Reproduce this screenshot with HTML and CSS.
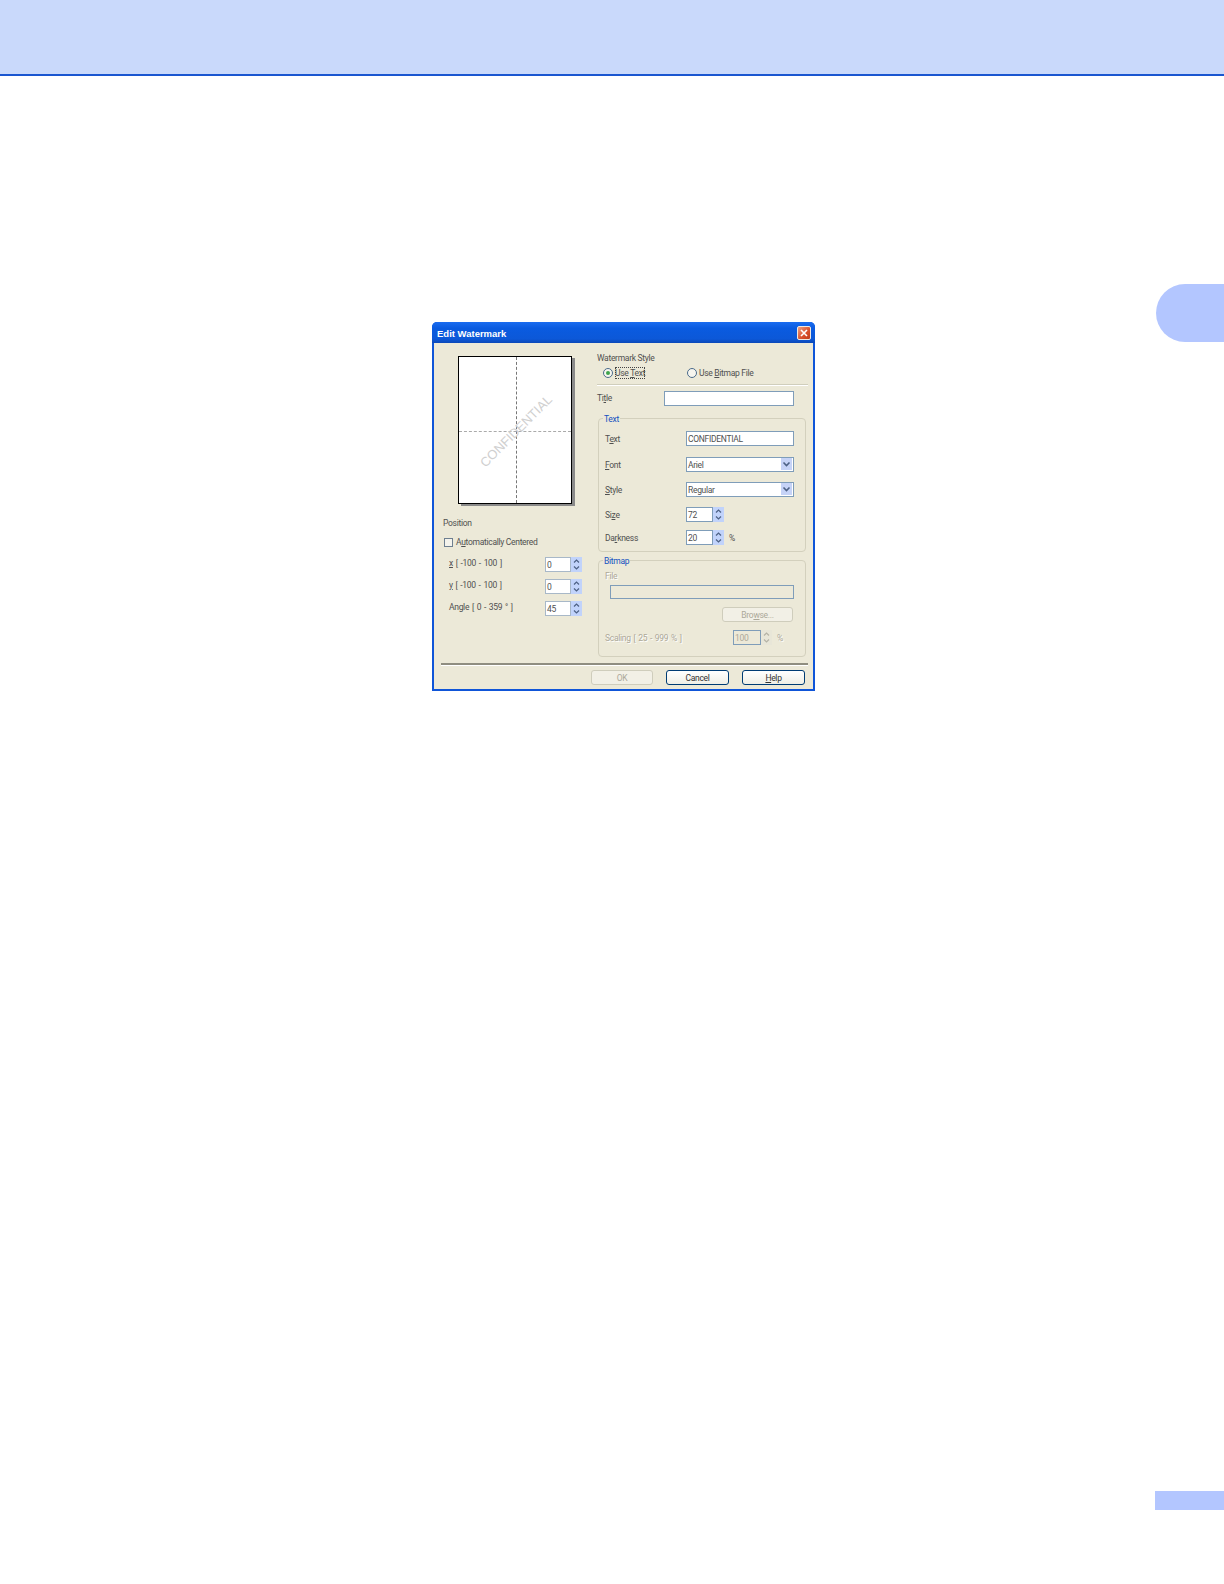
FILE: index.html

```html
<!DOCTYPE html>
<html lang="en">
<head>
  <meta charset="UTF-8">
  <title>Edit Watermark</title>
  <link rel="stylesheet" href="styles.css">
</head>
<body>
  <header class="band"></header>
  <div class="middle">
    <div class="dialog">
      <div class="titlebar">
        <span class="title">Edit Watermark</span>
        <span class="close">
          <svg width="14" height="14" viewBox="0 0 14 14"><path d="M4 4l6 6M10 4l-6 6" stroke="#fff" stroke-width="1.6" fill="none"/></svg>
        </span>
      </div>
      <div class="client">
        <div class="panes">
          <div class="left">
            <div class="page">
              <span class="vline"></span>
              <span class="hline"></span>
              <span class="mark">CONFIDENTIAL</span>
            </div>
            <div class="label pos-label">Position</div>
            <div class="auto-row">
              <span class="check"></span>
              <span class="label">A<u>u</u>tomatically Centered</span>
            </div>
            <div class="spin-row">
              <span class="label spin-label"><u>x</u> [ -100 - 100 ]</span>
              <span class="input num">0</span>
              <span class="spin"><svg width="11" height="15" viewBox="0 0 11 15"><path d="M3 5.5l2.5-2.5 2.5 2.5M3 9.5l2.5 2.5 2.5-2.5" stroke="#4d6185" stroke-width="1.2" fill="none"/></svg></span>
            </div>
            <div class="spin-row">
              <span class="label spin-label"><u>y</u> [ -100 - 100 ]</span>
              <span class="input num">0</span>
              <span class="spin"><svg width="11" height="15" viewBox="0 0 11 15"><path d="M3 5.5l2.5-2.5 2.5 2.5M3 9.5l2.5 2.5 2.5-2.5" stroke="#4d6185" stroke-width="1.2" fill="none"/></svg></span>
            </div>
            <div class="spin-row">
              <span class="label spin-label">Angle [ 0 - 359 ° ]</span>
              <span class="input num">45</span>
              <span class="spin"><svg width="11" height="15" viewBox="0 0 11 15"><path d="M3 5.5l2.5-2.5 2.5 2.5M3 9.5l2.5 2.5 2.5-2.5" stroke="#4d6185" stroke-width="1.2" fill="none"/></svg></span>
            </div>
          </div>

          <div class="right">
            <div class="label">Watermark Style</div>
            <div class="radios">
              <span class="radio-item first">
                <span class="radio on"></span>
                <span class="label focus">Use <u>T</u>ext</span>
              </span>
              <span class="radio-item">
                <span class="radio"></span>
                <span class="label">Use <u>B</u>itmap File</span>
              </span>
            </div>
            <div class="divider"></div>
            <div class="title-row">
              <span class="label">Ti<u>t</u>le</span>
              <span class="input title-input"></span>
            </div>

            <div class="group text-group">
              <span class="legend">Text</span>
              <div class="row row-text">
                <span class="label row-label">T<u>e</u>xt</span>
                <span class="input wide">CONFIDENTIAL</span>
              </div>
              <div class="row">
                <span class="label row-label"><u>F</u>ont</span>
                <span class="input wide select">Ariel
                  <span class="drop"><svg width="11" height="12" viewBox="0 0 11 12"><path d="M2.5 4.5l3 3 3-3" stroke="#4d6185" stroke-width="1.6" fill="none"/></svg></span>
                </span>
              </div>
              <div class="row">
                <span class="label row-label"><u>S</u>tyle</span>
                <span class="input wide select">Regular
                  <span class="drop"><svg width="11" height="12" viewBox="0 0 11 12"><path d="M2.5 4.5l3 3 3-3" stroke="#4d6185" stroke-width="1.6" fill="none"/></svg></span>
                </span>
              </div>
              <div class="row row-size">
                <span class="label row-label">Si<u>z</u>e</span>
                <span class="input small">72</span>
                <span class="spin"><svg width="11" height="15" viewBox="0 0 11 15"><path d="M3 5.5l2.5-2.5 2.5 2.5M3 9.5l2.5 2.5 2.5-2.5" stroke="#4d6185" stroke-width="1.2" fill="none"/></svg></span>
              </div>
              <div class="row">
                <span class="label row-label">Da<u>r</u>kness</span>
                <span class="input small">20</span>
                <span class="spin"><svg width="11" height="15" viewBox="0 0 11 15"><path d="M3 5.5l2.5-2.5 2.5 2.5M3 9.5l2.5 2.5 2.5-2.5" stroke="#4d6185" stroke-width="1.2" fill="none"/></svg></span>
                <span class="label percent">%</span>
              </div>
            </div>

            <div class="group bitmap-group">
              <span class="legend">Bitmap</span>
              <div class="label off file-label">File</div>
              <div class="input off-input file-input"></div>
              <div class="browse-row"><span class="btn disabled browse">Bro<u>w</u>se...</span></div>
              <div class="scale-row">
                <span class="label off scale-label">Scaling [ 25 - 999 % ]</span>
                <span class="input off-input scale-input">100</span>
                <span class="spin spin-off"><svg width="11" height="15" viewBox="0 0 11 15"><path d="M3 5.5l2.5-2.5 2.5 2.5M3 9.5l2.5 2.5 2.5-2.5" stroke="#b5b3a6" stroke-width="1.2" fill="none"/></svg></span>
                <span class="label off percent">%</span>
              </div>
            </div>
          </div>
        </div>

        <div class="footer-line"></div>
        <div class="buttons">
          <span class="btn disabled ok">OK</span>
          <span class="btn cancel">Cancel</span>
          <span class="btn cancel"><u>H</u>elp</span>
        </div>
      </div>
    </div>
    <div class="thumb"></div>
  </div>
  <div class="pageno"></div>
</body>
</html>
```

FILE: styles.css

```css
* {
  box-sizing: border-box;
}
body {
  margin: 0;
  height: 1584px;
  overflow: hidden;
  background-color: #fff;
  font-family: Roboto, "Liberation Sans", sans-serif;
  font-size: 8.5px;
  letter-spacing: -0.3px;
  color: #505050;
}
.band {
  height: 76px;
  background-color: #c9d9fb;
  border-bottom: 2px solid #1a56d0;
}
.middle {
  display: flex;
  align-items: flex-start;
  margin-top: 208px;
}
.thumb {
  width: 68px;
  height: 58px;
  margin-left: auto;
  background-color: #b3c6ff;
  border-radius: 29px 0 0 29px;
}
.pageno {
  width: 69px;
  height: 19px;
  margin: 800px 0 0 auto;
  background-color: #b3c6ff;
}

/* dialog */
.dialog {
  width: 383px;
  height: 369px;
  margin: 38px 0 0 432px;
  display: flex;
  flex-direction: column;
  border-radius: 5px 5px 0 0;
  background-color: #0f55d8;
}
.titlebar {
  height: 21px;
  flex: none;
  display: flex;
  align-items: center;
  justify-content: space-between;
  padding: 0 4px 0 5px;
  border-radius: 5px 5px 0 0;
  background: linear-gradient(#1a6cf0, #0a5be0 30%, #0c58d8 80%, #0a48b8);
}
.title {
  padding-top: 2px;
  color: #fff;
  font-family: "Liberation Sans", sans-serif;
  font-size: 9.5px;
  font-weight: bold;
  letter-spacing: 0;
}
.close {
  width: 14px;
  height: 14px;
  display: block;
  border: 1px solid #f0e8e0;
  border-radius: 2px;
  background: linear-gradient(135deg, #f0a080, #d8502c 60%, #c03c18);
}
.close svg {
  display: block;
  margin: -1px;
}
.client {
  flex: 1;
  margin: 0 2px 2px;
  background-color: #ece9d8;
}
.panes {
  height: 320px;
  display: flex;
}
.label {
  line-height: 12px;
  white-space: nowrap;
}
.input {
  display: block;
  height: 15px;
  line-height: 14px;
  padding-left: 1px;
  background-color: #fff;
  border: 1px solid #7f9db9;
  white-space: nowrap;
}

/* left column */
.left {
  width: 163px;
  flex: none;
}
.page {
  position: relative;
  width: 114px;
  height: 148px;
  margin: 13px 0 0 24px;
  background-color: #fff;
  border: 1px solid #000;
  box-shadow: 3px 2px 0 #8a8a8a;
}
.vline {
  position: absolute;
  left: 57px;
  top: 0;
  bottom: 0;
  border-left: 1px dashed #777;
}
.hline {
  position: absolute;
  top: 74px;
  left: 0;
  right: 0;
  border-top: 1px dashed #aaa;
}
.mark {
  position: absolute;
  left: 57px;
  top: 74px;
  transform: translate(-50%, -50%) rotate(-45deg);
  font-family: "Liberation Sans", sans-serif;
  font-size: 13px;
  letter-spacing: 0;
  color: #d0d0d0;
  white-space: nowrap;
}
.pos-label {
  margin: 13px 0 0 9px;
}
.auto-row {
  display: flex;
  align-items: center;
  margin: 7px 0 0 10px;
}
.check {
  width: 9px;
  height: 9px;
  margin-right: 3px;
  background-color: #f4f3ec;
  border: 1px solid #6e7f90;
}
.spin-row {
  display: flex;
  align-items: center;
  height: 15px;
  margin: 7px 0 0 15px;
}
.auto-row + .spin-row {
  margin-top: 9px;
}
.spin-label {
  width: 96px;
  margin-top: -4px;
  word-spacing: 1px;
}
.num {
  width: 26px;
  border-color: #a8b8c8;
}
.spin {
  display: block;
  width: 11px;
  height: 15px;
  background-color: #c1d3fb;
}
.spin svg {
  display: block;
}
.spin-off {
  background-color: #e8e6d8;
}

/* right column */
.right {
  width: 211px;
  margin-left: 0;
  padding-top: 9px;
}
.radios {
  display: flex;
  margin: 3px 0 0 6px;
}
.radio-item {
  display: flex;
  align-items: center;
}
.radio-item.first {
  width: 84px;
}
.radio {
  position: relative;
  width: 10px;
  height: 10px;
  margin-right: 2px;
  background-color: #f6f5ee;
  border: 1px solid #4a6a8a;
  border-radius: 50%;
}
.radio.on::after {
  content: "";
  position: absolute;
  left: 2px;
  top: 2px;
  width: 4px;
  height: 4px;
  border-radius: 50%;
  background-color: #3fa34d;
}
.focus {
  outline: 1px dotted #444;
  outline-offset: -1px;
}
.divider {
  height: 2px;
  margin-top: 5px;
  background-color: #fff;
  border-top: 1px solid #d0cebc;
}
.title-row {
  display: flex;
  align-items: center;
  margin-top: 5px;
}
.title-row .label {
  width: 67px;
  margin-top: -2px;
}
.title-input {
  width: 130px;
}
.group {
  position: relative;
  width: 208px;
  margin-left: 1px;
  border: 1px solid #d3d0bd;
  border-radius: 4px;
}
.legend {
  position: absolute;
  left: 4px;
  top: -6px;
  padding: 0 1px;
  line-height: 12px;
  color: #1450c0;
  background-color: #ece9d8;
}
.text-group {
  height: 134px;
  margin-top: 12px;
  padding: 12px 0 0 6px;
}
.row {
  display: flex;
  align-items: center;
  height: 15px;
  margin-bottom: 10px;
}
.row-text {
  margin-bottom: 11px;
}
.row-size {
  margin-bottom: 8px;
}
.row-label {
  width: 81px;
}
.wide {
  width: 108px;
}
.select {
  position: relative;
}
.drop {
  position: absolute;
  right: 1px;
  top: 0;
  width: 11px;
  height: 12px;
  background-color: #c6d3f7;
}
.drop svg {
  display: block;
}
.small {
  width: 27px;
}
.percent {
  margin-left: 5px;
}
.bitmap-group {
  height: 97px;
  margin-top: 8px;
  padding: 9px 0 0 6px;
}
.off {
  color: #aca899;
  text-shadow: 1px 1px 0 #fff;
}
.off-input {
  color: #aca899;
  background-color: #ece9d8;
}
.file-input {
  width: 184px;
  height: 14px;
  margin: 3px 0 0 5px;
}
.browse-row {
  display: flex;
  justify-content: flex-end;
  margin: 8px 12px 0 0;
}
.scale-row {
  display: flex;
  align-items: center;
  height: 15px;
  margin-top: 8px;
}
.scale-label {
  width: 128px;
  word-spacing: 1px;
}
.scale-input {
  width: 28px;
}

/* buttons */
.btn {
  display: block;
  height: 15px;
  line-height: 14px;
  text-align: center;
  color: #333;
  background: linear-gradient(#fff, #f0efe6);
  border: 1px solid #003c74;
  border-radius: 3px;
}
.btn.disabled {
  color: #aca899;
  background: #f2f0e6;
  border-color: #cfcdbc;
}
.browse {
  width: 71px;
}
.footer-line {
  height: 3px;
  margin: 0 5px 0 7px;
  background-color: #8f8d80;
  border-bottom: 1px solid #fff;
}
.buttons {
  display: flex;
  justify-content: flex-end;
  gap: 13px;
  margin-top: 4px;
  padding-right: 8px;
}
.ok {
  width: 62px;
}
.cancel {
  width: 63px;
}
```
